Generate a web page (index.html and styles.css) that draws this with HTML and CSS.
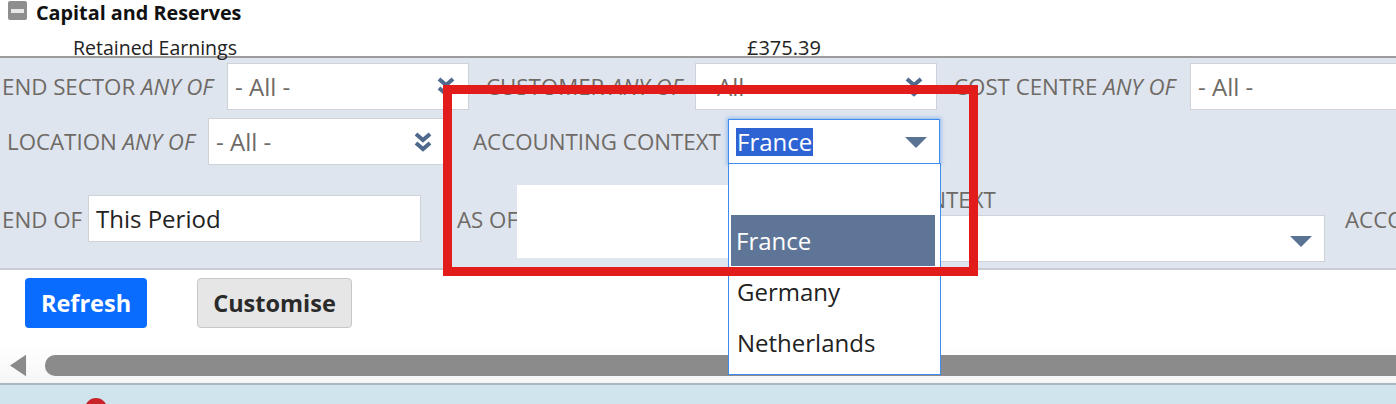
FILE: index.html
```html
<!DOCTYPE html>
<html>
<head>
<meta charset="utf-8">
<link rel="stylesheet" href="styles.css">
</head>
<body>
<div class="page">
  <div class="summary">
    <div class="section-head">
      <span class="collapse-icon"><span class="collapse-bar"></span></span>
      <span class="section-title">Capital and Reserves</span>
    </div>
    <div class="line-row">
      <span class="line-name">Retained Earnings</span>
      <span class="line-amount">£375.39</span>
    </div>
  </div>

  <div class="filters">
    <div class="filter-row row1">
      <span class="flabel w-sector">END SECTOR <i>ANY OF</i></span>
      <div class="field f-sector"><span class="fval">- All -</span>
        <svg class="chev" viewBox="0 0 20 22"><path d="M3 3 L10 9 L17 3 M3 12 L10 18 L17 12"/></svg></div>
      <span class="flabel w-customer">CUSTOMER <i>ANY OF</i></span>
      <div class="field f-customer"><span class="fval">- All -</span>
        <svg class="chev" viewBox="0 0 20 22"><path d="M3 3 L10 9 L17 3 M3 12 L10 18 L17 12"/></svg></div>
      <span class="flabel w-cost">COST CENTRE <i>ANY OF</i></span>
      <div class="field f-cost"><span class="fval">- All -</span></div>
    </div>
    <div class="filter-row row2">
      <span class="flabel w-location">LOCATION <i>ANY OF</i></span>
      <div class="field f-location"><span class="fval">- All -</span>
        <svg class="chev" viewBox="0 0 20 22"><path d="M3 3 L10 9 L17 3 M3 12 L10 18 L17 12"/></svg></div>
      <span class="flabel w-acct">ACCOUNTING CONTEXT</span>
      <div class="field f-acct focused"><span class="sel-text">France</span>
        <svg class="tri" viewBox="0 0 22 11"><path d="M0 0 H22 L11 11 Z"/></svg></div>
    </div>
    <div class="filter-row row3">
      <span class="flabel w-endof">END OF</span>
      <div class="field f-endof"><span class="fval dark">This Period</span></div>
      <span class="flabel w-asof">AS OF</span>
      <div class="field f-asof"></div>
      <div class="stacked">
        <span class="flabel stacked-label">ACCOUNTING CONTEXT</span>
        <div class="field f-acct2">
          <svg class="tri" viewBox="0 0 22 11"><path d="M0 0 H22 L11 11 Z"/></svg></div>
      </div>
      <span class="flabel w-acco">ACCOUNTING CONTEXT</span>
    </div>
  </div>

  <div class="actions">
    <button class="btn btn-primary">Refresh</button>
    <button class="btn btn-secondary">Customise</button>
  </div>

  <div class="hscroll">
    <svg class="scroll-arrow" viewBox="0 0 18 23"><path d="M17 0 V23 L0 11.5 Z"/></svg>
    <div class="scroll-thumb"></div>
  </div>

  <div class="bottom-band"><span class="red-dot"></span></div>

  <ul class="dropdown">
    <li class="opt"></li>
    <li class="opt active">France</li>
    <li class="opt">Germany</li>
    <li class="opt">Netherlands</li>
  </ul>

  <div class="annotation"></div>
</div>
</body>
</html>
```

FILE: styles.css
```css
* { box-sizing: border-box; }
html, body { margin: 0; padding: 0; background: #fff; }
body { font-family: "Open Sans", "Liberation Sans", sans-serif; color: #222; overflow: hidden; }
.page { position: relative; width: 1396px; height: 404px; overflow: hidden; }

.summary { height: 58px; border-bottom: 2px solid #9c9c9c; }
.section-head { display: flex; align-items: center; height: 24px; padding-left: 8px; }
.collapse-icon { width: 19px; height: 19px; background: #8e8e8e; border-radius: 2px; display: flex; align-items: center; justify-content: center; margin-right: 9px; margin-top: -3px; }
.collapse-bar { width: 13px; height: 4px; background: #e8e8e8; }
.section-title { font-weight: 700; font-size: 19.8px; color: #111; }
.line-row { display: flex; align-items: center; height: 32px; padding-top: 14px; }
.line-name { font-size: 19.5px; padding-left: 73px; width: 747px; color: #222; }
.line-amount { font-size: 20px; color: #222; }

.filters { background: #dfe5ee; height: 212px; border-bottom: 2px solid #c9cdd3; padding-top: 5px; overflow: hidden; }
.filter-row { display: flex; align-items: center; white-space: nowrap; }
.row1 { height: 47px; }
.row2 { height: 47px; margin-top: 8px; }
.row3 { height: 82px; margin-top: 20px; align-items: flex-start; }

.flabel { font-size: 22.3px; color: #6e6a66; flex: none; }
.flabel i { font-style: italic; }
.w-sector { width: 227px; padding-left: 2px; }
.w-customer { width: 226px; padding-left: 17px; }
.w-cost { width: 253px; padding-left: 17px; }
.w-location { width: 208px; padding-left: 7px; }
.w-acct { width: 282px; padding-left: 27px; }

.field { flex: none; height: 47px; background: #fff; border: 1px solid #cfd2d6; display: flex; align-items: center; padding-left: 7px; position: relative; }
.fval { font-size: 24px; color: #6e6a66; }
.fval.dark { color: #222; }
.f-sector { width: 242px; }
.f-customer { width: 242px; }
.f-cost { width: 220px; }
.f-location { width: 238px; }
.f-acct { width: 212px; height: 45px; }
.focused { border: 1px solid #3d8cf0; box-shadow: 0 0 4px 1px rgba(70,140,240,0.55); }
.sel-text { font-size: 24px; color: #fff; background: #2e63d3; line-height: 28px; padding: 0 1px; }

.chev { position: absolute; right: 12px; top: 12px; width: 20px; height: 22px; fill: none; stroke: #4f6a8c; stroke-width: 4; stroke-linejoin: miter; }
.tri { position: absolute; right: 12px; top: 17px; width: 22px; height: 11px; fill: #5b7393; }

.row3 .flabel { margin-top: 19px; }
.w-endof { width: 88px; padding-left: 2px; }
.f-endof { width: 333px; margin-top: 10px; }
.w-asof { width: 96px; padding-left: 36px; }
.f-asof { width: 231px; height: 73px; border: none; }
.stacked { display: flex; flex-direction: column; flex: none; }
.row3 .stacked-label { margin-top: 0; height: 30px; line-height: 30px; }
.f-acct2 { width: 577px; height: 47px; }
.f-acct2 .tri { top: 20px; }
.w-acco { padding-left: 20px; }

.actions { display: flex; gap: 50px; padding: 8px 0 0 25px; height: 75px; }
.btn { font-family: "Open Sans", "Liberation Sans", sans-serif; font-weight: 700; font-size: 23.5px; height: 50px; border-radius: 4px; padding: 0; }
.btn-primary { width: 122px; background: #0a6cff; color: #fff; border: none; }
.btn-secondary { width: 155px; background: #e6e6e6; color: #2a2a2a; border: 1px solid #c8c8c8; }

.hscroll { height: 40px; background: linear-gradient(#fff, #f6f6f6); display: flex; align-items: center; padding-left: 10px; padding-top: 2px; border-bottom: 2px solid #a9b6bb; }
.scroll-arrow { width: 17px; height: 23px; fill: #8a8a8a; flex: none; }
.scroll-thumb { height: 21px; background: #8b8b8b; border-radius: 10px; margin-left: 18px; flex: 1; margin-right: -20px; }

.bottom-band { height: 30px; background: #cfe4ec; position: relative; }
.red-dot { position: absolute; left: 85px; top: 13px; width: 22px; height: 22px; border-radius: 50%; background: #c8242a; }

.dropdown { position: absolute; left: 728px; top: 163px; width: 213px; height: 212px; margin: 0; padding: 0 2px; list-style: none; background: #fff; border: 1px solid #3d8cf0; }
.opt { height: 51px; font-size: 24px; color: #222; display: flex; align-items: center; padding-left: 6px; }
.opt.active { background: #5f7597; color: #fff; margin-right: 3px; padding-left: 5px; }

.annotation { position: absolute; left: 443px; top: 85px; width: 535px; height: 191px; border: 9px solid #e21b1b; }
```
